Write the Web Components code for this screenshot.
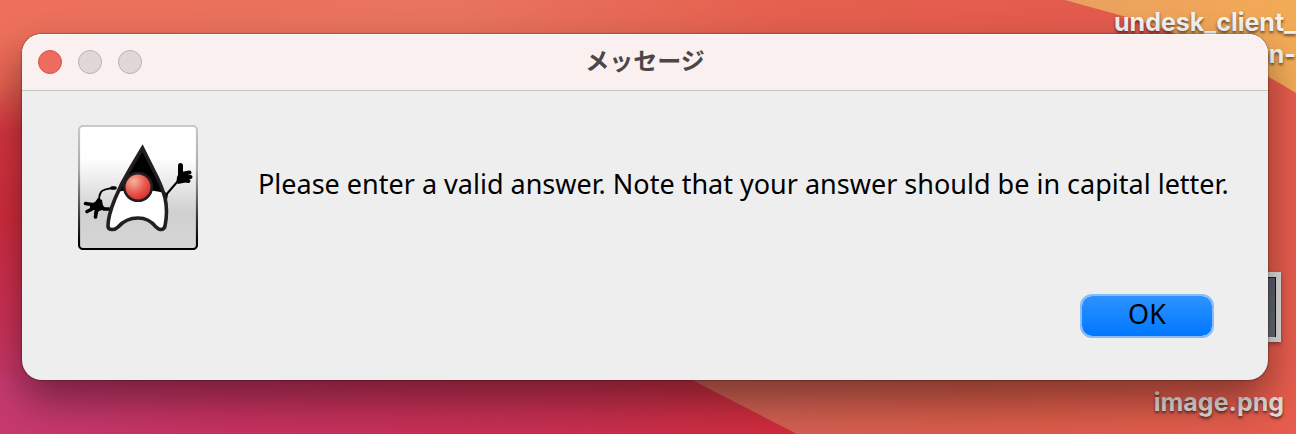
<!DOCTYPE html>
<html lang="en">
<head>
<meta charset="utf-8">
<title>メッセージ</title>
<style>
html, body { margin: 0; height: 100%; }
body { font-family: "Noto Sans", sans-serif; overflow: hidden; }
</style>
</head>
<body>
<mac-desktop>
  <desktop-file slot="files" style="top: 6px; right: 0">undesk_client_<br>on-</desktop-file>
  <desktop-file slot="files" style="top: 272px; right: 12px" thumb>image.png</desktop-file>
  <message-dialog heading="メッセージ">
    <duke-icon slot="icon"></duke-icon>
    Please enter a valid answer. Note that your answer should be in capital letter.
    <push-button slot="actions">OK</push-button>
  </message-dialog>
</mac-desktop>
<script>
function define(name, html) {
  const template = document.createElement('template');
  template.innerHTML = html;
  customElements.define(name, class extends HTMLElement {
    connectedCallback() {
      if (this.shadowRoot) return;
      this.attachShadow({ mode: 'open' }).append(template.content.cloneNode(true));
      const heading = this.shadowRoot.querySelector('[data-heading]');
      if (heading) heading.textContent = this.getAttribute('heading');
    }
  });
}

define('desktop-wallpaper', `
<style>
:host { display: block; position: absolute; inset: 0; }
svg { display: block; width: 100%; height: 100%; }
</style>
<svg viewBox="0 0 1296 434" preserveAspectRatio="none" aria-hidden="true">
  <defs>
    <linearGradient id="left" x1="0" y1="0" x2="0" y2="1">
      <stop offset="0" stop-color="#ed705b"/><stop offset=".08" stop-color="#ed705b"/><stop offset=".19" stop-color="#e46151"/>
      <stop offset=".3" stop-color="#d4353f"/><stop offset=".5" stop-color="#d02b3c"/>
      <stop offset=".75" stop-color="#cb3157"/><stop offset=".87" stop-color="#c6386a"/><stop offset="1" stop-color="#c63a70"/>
    </linearGradient>
    <linearGradient id="top" x1="0" y1="0" x2="1" y2="0">
      <stop offset="0" stop-color="#ed705b"/><stop offset=".35" stop-color="#e8745f"/>
      <stop offset=".6" stop-color="#e5604f"/><stop offset="1" stop-color="#e2584c"/>
    </linearGradient>
    <linearGradient id="low" x1="0" y1="0" x2="1" y2="0">
      <stop offset="0" stop-color="#c63a70"/><stop offset=".3" stop-color="#c6315f"/>
      <stop offset=".7" stop-color="#c82f50"/><stop offset="1" stop-color="#d02c3a"/>
    </linearGradient>
    <linearGradient id="ridge" x1="0" y1="0" x2="1" y2="0">
      <stop offset="0" stop-color="#cf6357"/><stop offset=".5" stop-color="#da5c4a"/><stop offset="1" stop-color="#e75c4d"/>
    </linearGradient>
    <linearGradient id="sun" x1="0" y1="0" x2="1" y2="0">
      <stop offset="0" stop-color="#e9a05e"/><stop offset="1" stop-color="#f3aa56"/>
    </linearGradient>
  </defs>
  <path fill="url(#left)" d="M0 0H1296V434H0Z"/>
  <path fill="url(#top)" d="M0 0H1296V36H0Z"/>
  <path fill="url(#low)" d="M0 378H810V434H0Z"/>
  <path fill="url(#ridge)" d="M650 358L692 380L797 434H1296V30H1200V358Z"/>
  <path fill="url(#sun)" d="M1065 0L1130 18Q1220 46 1296 93V0Z"/>
</svg>`);

define('mac-desktop', `
<style>
:host {
  position: relative; box-sizing: border-box; min-height: 100vh; overflow: hidden;
  display: grid; align-items: start; padding: 34px 28px 54px 22px;
}
</style>
<desktop-wallpaper></desktop-wallpaper>
<slot name="files"></slot>
<slot></slot>`);

define('desktop-file', `
<style>
:host {
  position: absolute; display: flex; flex-direction: column; align-items: flex-end;
  font: 700 25px/32px Inter, sans-serif; color: #f4f2f1; text-align: right;
  text-shadow: 0 2px 3px rgba(0, 0, 0, .6);
}
:host([thumb]) { color: #e4dedc; }
.thumb { display: none; }
:host([thumb]) .thumb {
  display: block; box-sizing: border-box; width: 120px; height: 70px; margin: 0 3px 44px 0;
  border: 5px solid #e2dfde; background: linear-gradient(#5a5e69, #686c77);
  box-shadow: 0 2px 4px rgba(0, 0, 0, .35), inset -1px 0 #15161d, inset 0 1px #22242d;
}
</style>
<span class="thumb"></span>
<span><slot></slot></span>`);

define('message-dialog', `
<style>
:host {
  position: relative; display: block; border-radius: 20px; background: #eee;
  color: #000; box-shadow: 0 0 2px rgba(0, 0, 0, .7), 0 20px 40px rgba(0, 0, 0, .42);
}
header {
  display: grid; grid-template-columns: 1fr auto 1fr; align-items: center; height: 56px; padding: 0 16px;
  border-bottom: 1px solid #c6c3c3; border-radius: 20px 20px 0 0; background: #faf0f0;
  box-shadow: inset 0 1px #fffafa;
}
.lights { display: flex; gap: 16px; }
.lights button {
  box-sizing: border-box; width: 24px; height: 24px; padding: 0;
  border: 1px solid #b9b1b2; border-radius: 50%; background: #dfd7d8;
}
.lights .close { border-color: #d85347; background: #ed6b5f; }
h1 { margin: 0; padding-bottom: 4px; font: 700 24px/32px "Noto Sans CJK JP", sans-serif; color: #4b4748; }
.content { display: flex; align-items: center; gap: 60px; padding: 34px 32px 0 56px; }
p { flex: 1; margin: 0; padding-bottom: 8px; font-size: 27px; line-height: 36px; white-space: nowrap; }
footer { display: flex; justify-content: flex-end; padding: 44px 54px 42px; }
</style>
<header>
  <div class="lights">
    <button class="close" aria-label="Close"></button>
    <button aria-label="Minimize" disabled></button>
    <button aria-label="Zoom" disabled></button>
  </div>
  <h1 data-heading></h1>
</header>
<div class="content"><slot name="icon"></slot><p><slot></slot></p></div>
<footer><slot name="actions"></slot></footer>`);

define('push-button', `
<style>
:host { display: block; }
button {
  display: block; box-sizing: border-box; min-width: 134px; height: 44px; padding: 0 20px 4px;
  border: 2px solid #86bcf8; border-radius: 12px; background: linear-gradient(#2d93ff, #0077ff) padding-box;
  font: 27px/36px "Noto Sans", sans-serif; color: #000;
}
</style>
<button type="button"><slot></slot></button>`);

define('duke-icon', `
<style>
:host { display: block; flex: none; width: 120px; height: 125px; }
svg { display: block; width: 100%; height: 100%; }
</style>
<svg viewBox="78 125 120 125" role="img" aria-label="Duke">
  <defs>
    <linearGradient id="face" x1="0" y1="0" x2="0" y2="1">
      <stop offset="0" stop-color="#fff"/><stop offset=".26" stop-color="#fff"/>
      <stop offset=".7" stop-color="#d0d0d0"/><stop offset="1" stop-color="#d6d6d6"/>
    </linearGradient>
    <linearGradient id="rim" x1="0" y1="0" x2="0" y2="1">
      <stop offset="0" stop-color="#c8c8c8"/><stop offset=".35" stop-color="#aaa"/>
      <stop offset=".75" stop-color="#333"/><stop offset=".95" stop-color="#000"/>
    </linearGradient>
    <radialGradient id="nose" cx=".35" cy=".3" r=".75">
      <stop offset="0" stop-color="#f6b39c"/><stop offset=".55" stop-color="#e75a50"/><stop offset="1" stop-color="#d62727"/>
    </radialGradient>
  </defs>
  <rect x="79" y="126" width="118" height="123" rx="4" fill="url(#face)" stroke="url(#rim)" stroke-width="2.2"/>
  <g fill="none" stroke="#000" stroke-linecap="round" stroke-linejoin="round">
    <path stroke-width="2" d="M114 188Q103 189 101 192Q99 195 99 200M165 196L178 181"/>
    <path stroke-width="3.6" d="M95 205L85.500 203.500M96 207L87 211.500M97 207L95.500 217M112 188L115 188M109 209H104L101 206"/>
    <path stroke-width="5" d="M180.500 175V171L180.500 165.500"/>
    <path stroke-width="4" d="M184 173.500L189.500 172.500M184 177L190.500 177M183 180L188.500 181"/>
  </g>
  <path d="M90 204L95 202L98 198L102 200L103 206L106 209L99 211L97 214H94L95 210L90 209ZM176.500 182L177 177L179 173L187 172V182L183 183L178 184ZM163 191L168 194L167 200L164 204Z"/>
  <path fill="#fff" d="M118 189H162L166 203Q167 216 165 225Q162 231 156 226Q149 218 138 218Q126 218 118 227Q110 231 108 225Q109 212 118 189Z"/>
  <path d="M142.500 147L130 168Q121 182 117 192Q123 190 138 190Q155 190 164 193Q162 185 156 173Z"/>
  <path fill="none" stroke="#231f20" stroke-width="3.600" stroke-linejoin="miter" d="M142.500 148L130 169C119 187 108 212 108 226C108 230 114 231 118 227Q126 218 138 218Q149 218 156 227C160 231 164 230 165 226Q168 211 165 198Q162 186 154 171Z"/>
  <circle cx="138" cy="187" r="13.800" fill="url(#nose)" stroke="#231f20" stroke-width="2.600"/>
</svg>`);
</script>
</body>
</html>
